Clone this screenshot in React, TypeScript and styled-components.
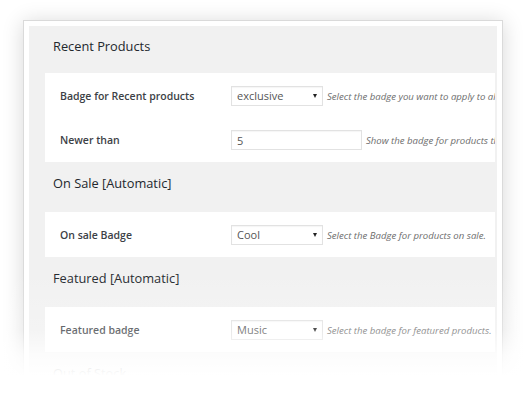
import React from "react";
import styled, { createGlobalStyle } from "styled-components";

const GlobalStyle = createGlobalStyle`
  html, body {
    margin: 0;
    padding: 0;
    background: #ffffff;
    font-family: "Open Sans", "Noto Sans", sans-serif;
  }
`;

type Field = {
  label: string;
  kind: "select" | "input";
  value: string;
  help: string;
};

type Section = {
  title: string;
  fields: Field[];
};

const sections: Section[] = [
  {
    title: "Recent Products",
    fields: [
      {
        label: "Badge for Recent products",
        kind: "select",
        value: "exclusive",
        help: "Select the badge you want to apply to all recent products.",
      },
      {
        label: "Newer than",
        kind: "input",
        value: "5",
        help: "Show the badge for products that are newer than X days.",
      },
    ],
  },
  {
    title: "On Sale [Automatic]",
    fields: [
      {
        label: "On sale Badge",
        kind: "select",
        value: "Cool",
        help: "Select the Badge for products on sale.",
      },
    ],
  },
  {
    title: "Featured [Automatic]",
    fields: [
      {
        label: "Featured badge",
        kind: "select",
        value: "Music",
        help: "Select the badge for featured products.",
      },
    ],
  },
  {
    title: "Out of Stock",
    fields: [],
  },
];

const Stage = styled.div`
  position: relative;
  padding: 20px 0 0 23px;
  height: 375px;
  box-sizing: border-box;
  overflow: hidden;
`;

const Card = styled.div`
  width: 480px;
  height: 380px;
  box-sizing: border-box;
  border: 1px solid #dadada;
  background: #ffffff;
  padding: 5px;
  box-shadow: 0 2px 20px rgba(0, 0, 0, 0.16);
`;

// white wash over the bottom of the card, the shot fades out there
const Fade = styled.div`
  position: absolute;
  left: 0;
  right: 0;
  top: 270px;
  bottom: 0;
  background: linear-gradient(
    to bottom,
    rgba(255, 255, 255, 0) 0,
    rgba(255, 255, 255, 0.22) 60px,
    rgba(255, 255, 255, 0.8) 85px,
    #ffffff 106px
  );
`;

const Panel = styled.div`
  background: #f1f1f1;
  height: 100%;
  overflow: hidden;
  padding-right: 2px;
`;

const Heading = styled.h2<{ $first?: boolean }>`
  margin: 0;
  padding: ${(p) => (p.$first ? "10px 24px 17px" : "11px 24px 19px")};
  font-size: 12.8px;
  line-height: 20px;
  font-weight: 500;
  color: #23282d;
  white-space: nowrap;
`;

const Table = styled.div`
  margin-left: 16px;
  background: #ffffff;
  padding-top: 1px;
  overflow: hidden;
`;

const Row = styled.div`
  display: grid;
  grid-template-columns: 171px auto;
  align-items: center;
  height: 44px;
  padding-left: 15px;
  white-space: nowrap;
`;

const Label = styled.div`
  font-size: 10.5px;
  font-weight: 600;
  color: #3c4146;
`;

const Control = styled.div`
  display: flex;
  align-items: center;
  gap: 4px;
`;

const SelectBox = styled.div`
  position: relative;
  width: 92px;
  height: 20px;
  box-sizing: border-box;
  border: 1px solid #e2e2e2;
  background: #ffffff;
  box-shadow: inset 0 1px 1px rgba(0, 0, 0, 0.04);
  padding-left: 5px;
  font-size: 11px;
  line-height: 18px;
  color: #555;
`;

const Arrow = styled.span`
  position: absolute;
  right: 5px;
  top: 7px;
  width: 0;
  height: 0;
  border-left: 2.5px solid transparent;
  border-right: 2.5px solid transparent;
  border-top: 4px solid #222;
`;

const TextInput = styled.input`
  width: 131px;
  height: 20px;
  box-sizing: border-box;
  border: 1px solid #e2e2e2;
  box-shadow: inset 0 1px 1px rgba(0, 0, 0, 0.04);
  padding: 0 5px;
  margin: 0;
  font-family: inherit;
  font-size: 11px;
  color: #555;
  outline: none;
`;

const Help = styled.span`
  font-size: 9.6px;
  font-style: italic;
  color: #6d6d6d;
`;

const FieldRow = ({ field }: { field: Field }) => (
  <Row>
    <Label>{field.label}</Label>
    <Control>
      {field.kind === "select" ? (
        <SelectBox>
          {field.value}
          <Arrow />
        </SelectBox>
      ) : (
        <TextInput readOnly defaultValue={field.value} />
      )}
      <Help>{field.help}</Help>
    </Control>
  </Row>
);

export default function App() {
  return (
    <>
      <GlobalStyle />
      <Stage>
        <Card>
          <Panel>
            {sections.map((section, i) => (
              <React.Fragment key={section.title}>
                <Heading $first={i === 0}>{section.title}</Heading>
                {section.fields.length > 0 && (
                  <Table>
                    {section.fields.map((f) => (
                      <FieldRow key={f.label} field={f} />
                    ))}
                  </Table>
                )}
              </React.Fragment>
            ))}
          </Panel>
        </Card>
        <Fade />
      </Stage>
    </>
  );
}
